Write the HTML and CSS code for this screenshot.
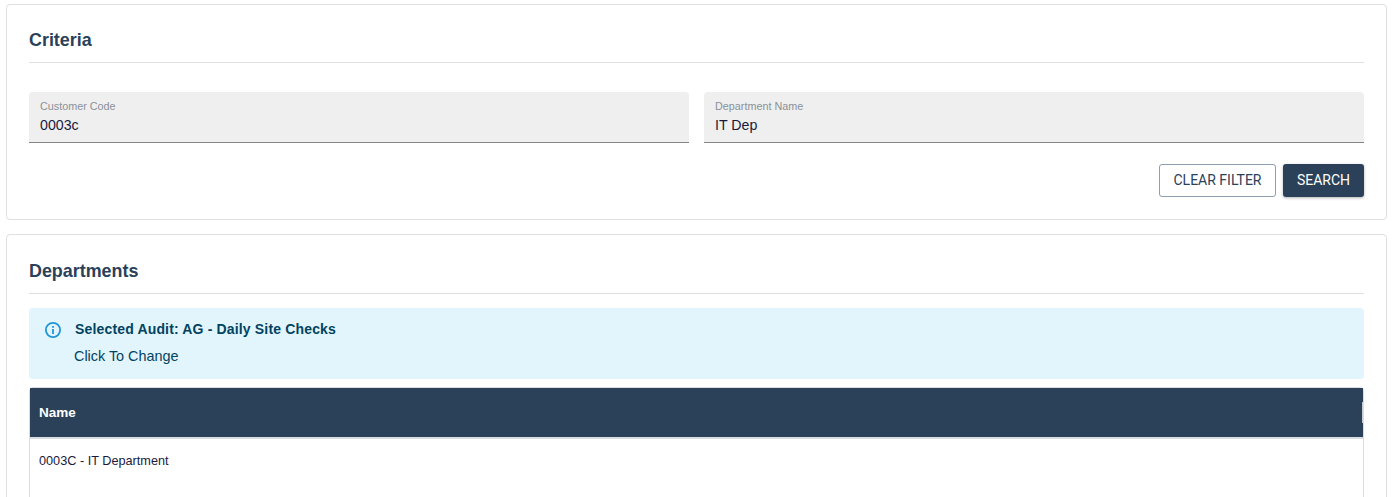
FILE: index.html
```html
<!DOCTYPE html>
<html lang="en">
<head>
    <meta charset="UTF-8">
    <meta name="viewport" content="width=device-width, initial-scale=1.0">
    <title>Departments</title>
    <link rel="stylesheet" href="styles.css">
</head>
<body>
    <div class="page">
        <!-- Criteria -->
        <section class="card card-criteria">
            <h2 class="card-title">Criteria</h2>
            <div class="fields">
                <div class="field">
                    <label class="field-label">Customer Code</label>
                    <div class="field-value">0003c</div>
                </div>
                <div class="field">
                    <label class="field-label">Department Name</label>
                    <div class="field-value">IT Dep</div>
                </div>
            </div>
            <div class="actions">
                <button class="btn btn-outline">CLEAR FILTER</button>
                <button class="btn btn-primary">SEARCH</button>
            </div>
        </section>

        <!-- Departments -->
        <section class="card card-departments">
            <h2 class="card-title">Departments</h2>
            <div class="alert">
                <svg class="alert-icon" width="18" height="18" viewBox="0 0 18 18" fill="none">
                    <circle cx="9" cy="9" r="7.1" stroke="#1e96d8" stroke-width="1.8"/>
                    <rect x="8.1" y="8" width="1.8" height="5" fill="#1e96d8"/>
                    <rect x="8.1" y="5" width="1.8" height="1.8" fill="#1e96d8"/>
                </svg>
                <div class="alert-body">
                    <div class="alert-title">Selected Audit: AG - Daily Site Checks</div>
                    <div class="alert-text">Click To Change</div>
                </div>
            </div>
            <div class="table">
                <div class="table-head">
                    <span>Name</span>
                    <span class="col-handle"></span>
                </div>
                <div class="table-row">0003C - IT Department</div>
            </div>
        </section>
    </div>
</body>
</html>
```

FILE: styles.css
```css
html, body {
    margin: 0;
    padding: 0;
    height: 100%;
    overflow: hidden;
    background-color: #fff;
    font-family: 'Liberation Sans', Arial, sans-serif;
}

.page {
    display: flex;
    flex-direction: column;
    gap: 14px;
    height: 100vh;
    box-sizing: border-box;
    padding: 4px 7px 0 6px;
    overflow: hidden;
}

.card {
    box-sizing: border-box;
    background-color: #fff;
    border: 1px solid #e0e0e0;
    border-radius: 4px;
    padding: 0 22px;
}

.card-criteria {
    height: 216px;
    flex-shrink: 0;
}

.card-departments {
    height: 400px;
    flex-shrink: 0;
    padding-top: 1px;
}

.card-title {
    margin: 0;
    height: 58px;
    box-sizing: border-box;
    padding-top: 25px;
    border-bottom: 1px solid #e0e0e0;
    color: #2a4159;
    font-size: 17.9px;
    line-height: 21px;
    font-weight: bold;
}

/* Filter fields */
.fields {
    display: grid;
    grid-template-columns: 1fr 1fr;
    gap: 15px;
    margin-top: 29px;
}

.field {
    box-sizing: border-box;
    height: 51px;
    padding: 8px 11px 0;
    background-color: #efefef;
    border-bottom: 1px solid #858585;
    border-radius: 4px 4px 0 0;
}

.field-label {
    display: block;
    color: #8b9199;
    font-size: 10.8px;
    line-height: 12px;
}

.field-value {
    margin-top: 4px;
    color: #1a1a3c;
    font-size: 14.2px;
    line-height: 18px;
}

.actions {
    display: flex;
    justify-content: flex-end;
    gap: 7px;
    margin-top: 21px;
}

.btn {
    box-sizing: border-box;
    height: 33px;
    padding: 0 0 2px;
    border-radius: 3px;
    font-family: Roboto, 'Liberation Sans', sans-serif;
    font-size: 14px;
    cursor: pointer;
}

.btn-outline {
    width: 117px;
    background-color: #fff;
    border: 1px solid #8d9fb0;
    color: #2a4159;
}

.btn-primary {
    width: 81px;
    background-color: #2a4159;
    border: 0;
    color: #fff;
    box-shadow: 0 1px 3px rgba(0, 0, 0, 0.3);
}

/* Info banner */
.alert {
    display: flex;
    height: 71px;
    box-sizing: border-box;
    margin-top: 14px;
    padding: 13px 15px 0;
    background-color: #e3f5fc;
    border-radius: 4px;
    color: #014361;
}

.alert-icon {
    flex-shrink: 0;
    margin-right: 13px;
}

.alert-title {
    font-size: 14px;
    line-height: 17px;
    font-weight: bold;
    letter-spacing: 0.16px;
}

.alert-text {
    margin-top: 10px;
    margin-left: -1px;
    font-size: 14.4px;
    line-height: 17px;
}

/* Table */
.table {
    margin-top: 8px;
    height: 200px;
    box-sizing: border-box;
    border: 1px solid #dcdcdc;
    border-radius: 4px 4px 0 0;
}

.table-head {
    display: flex;
    justify-content: space-between;
    align-items: center;
    height: 51px;
    box-sizing: border-box;
    padding-left: 9px;
    background-color: #2a4159;
    border-bottom: 2px solid #d8dde2;
    color: #fff;
    font-size: 13.5px;
    font-weight: bold;
}

.col-handle {
    width: 1px;
    height: 21px;
    background-color: #c6ccd2;
}

.table-row {
    padding: 15px 9px;
    color: #1a1a3c;
    font-size: 12.7px;
    line-height: 14px;
}
```
